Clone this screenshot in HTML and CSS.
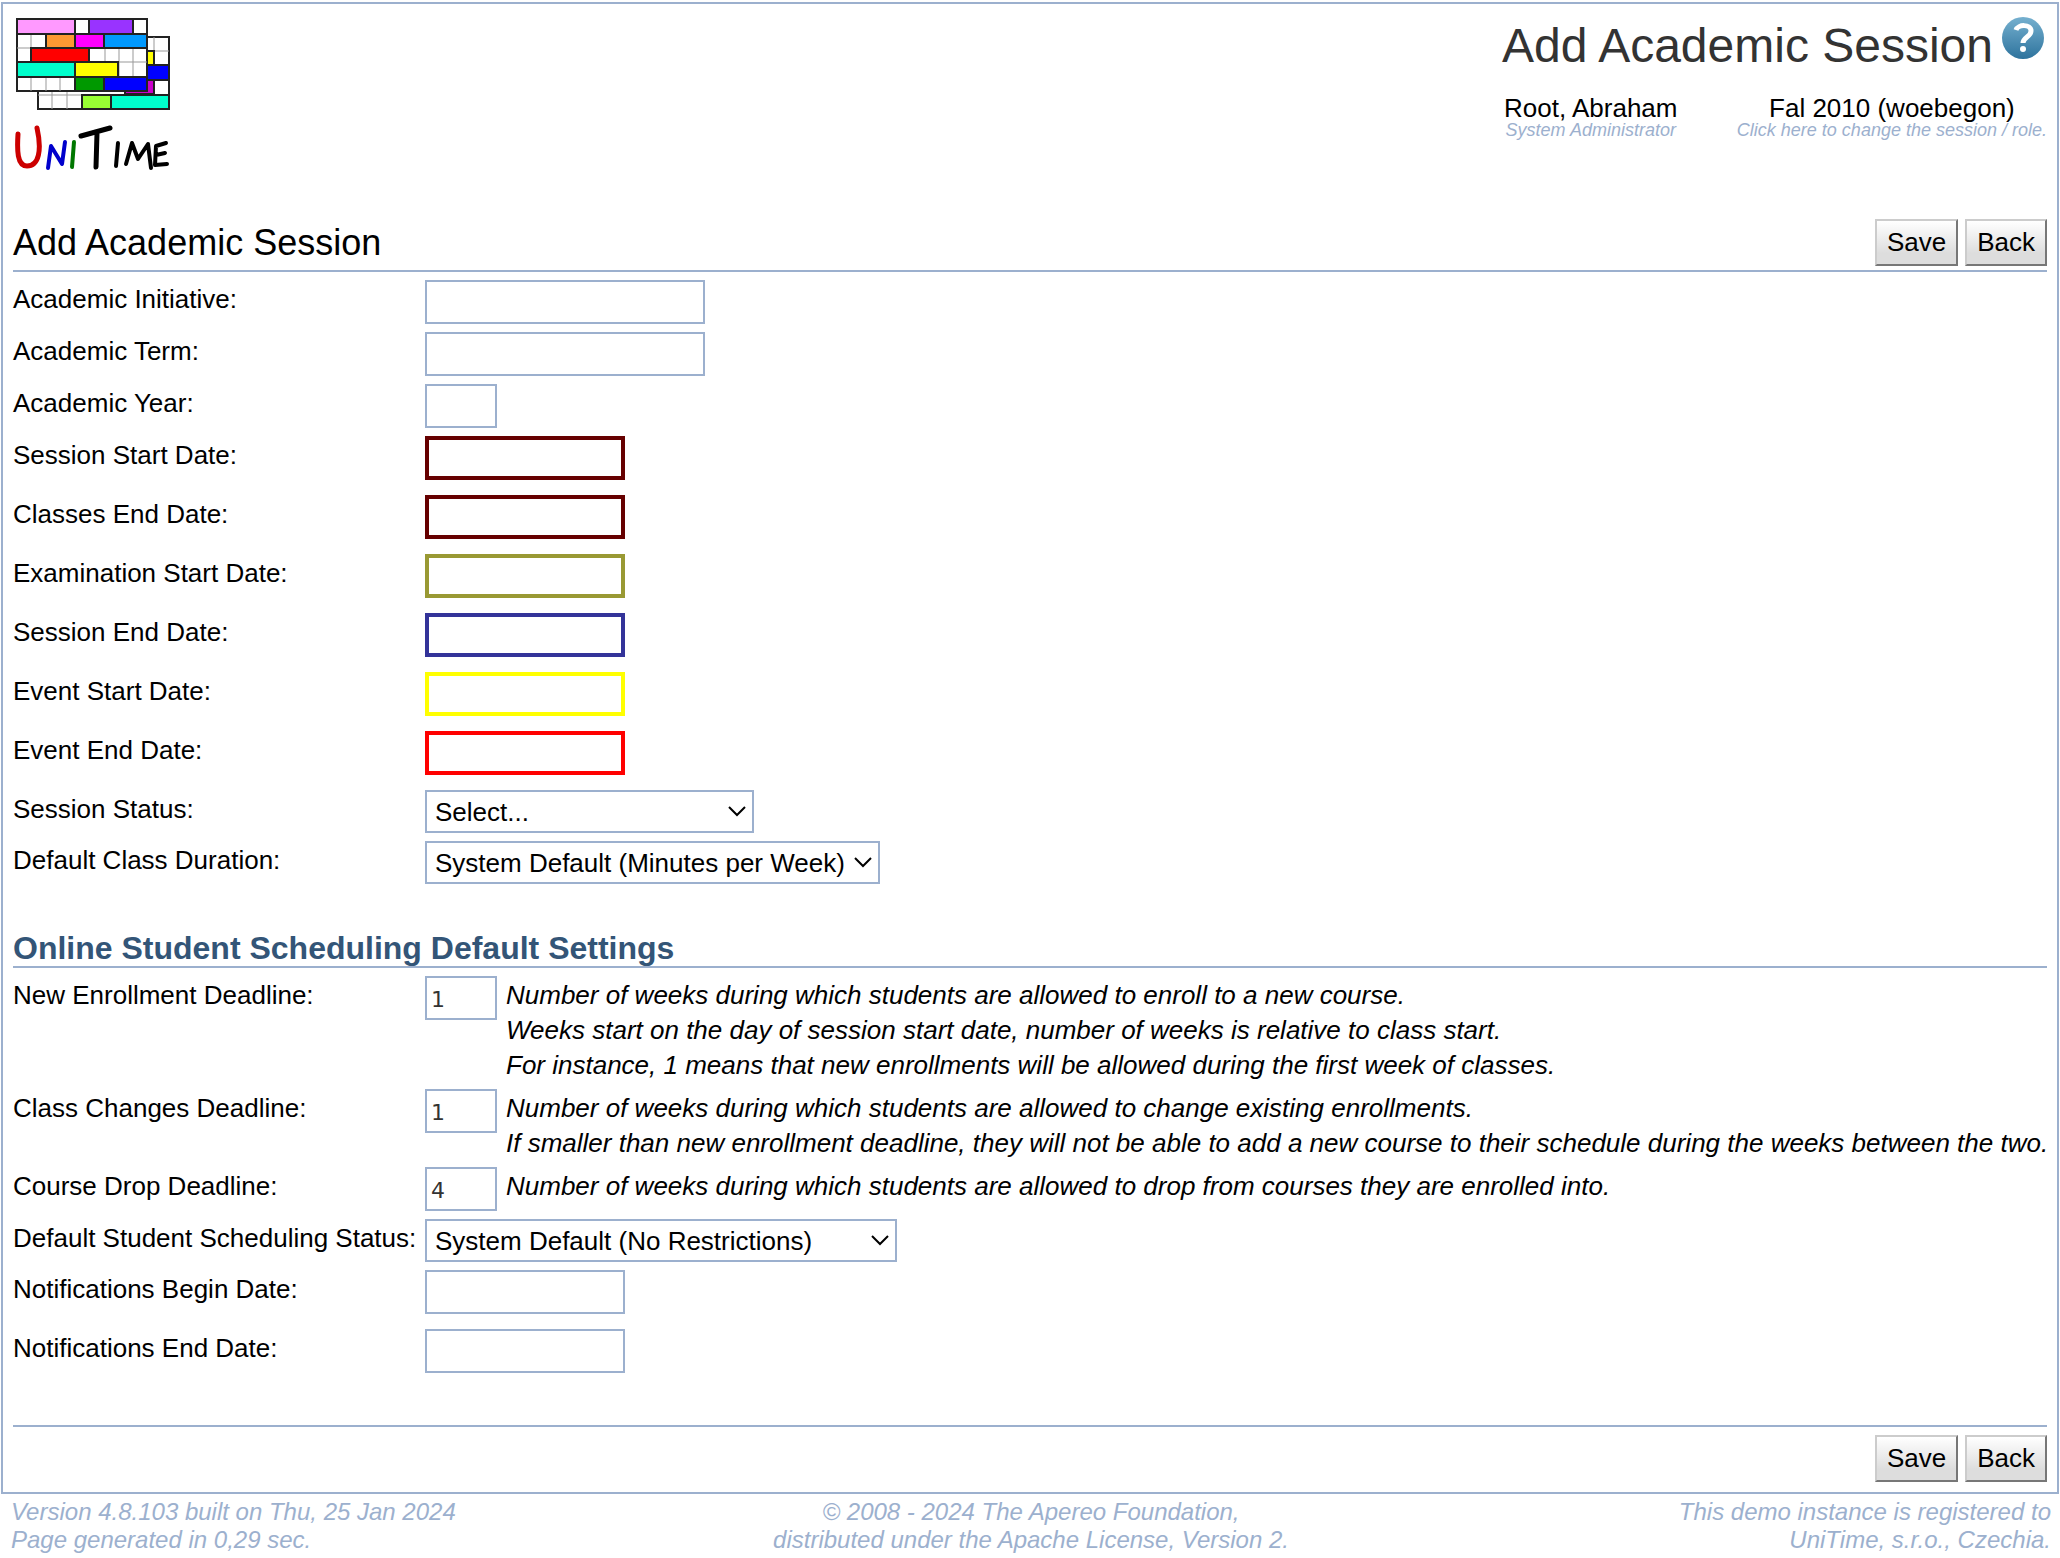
FILE: index.html
```html
<!DOCTYPE html>
<html lang="en">
<head>
<meta charset="utf-8">
<title>Add Academic Session</title>
<link rel="stylesheet" href="styles.css">
</head>
<body>
<main class="frame">
  <header class="banner">
    <svg class="logo" viewBox="0 0 160 160" role="img" aria-label="UniTime">
      <g stroke="#222" stroke-width="2">
        <path fill="#fff" d="M23 21H154V93H23z"/>
        <path fill="none" stroke="#999" stroke-width="1" d="M23 79H67M37 75V93M52 75V93M133 35H154M133 49H154M139 21V93"/>
        <path fill="#ff0" d="M124 35H139V49H124z"/>
        <path fill="#00f" d="M124 49H154V64H124z"/>
        <path fill="#c0c" d="M110 64H139V78H110z"/>
        <path fill="#9f3" d="M67 79H96V93H67z"/>
        <path fill="#0fc" d="M96 79H154V93H96z"/>
        <path fill="#fff" d="M2 3H132V75H2z"/>
        <path fill="none" stroke="#999" stroke-width="1" d="M16 18V46M31 18V32M2 32H16M16 61V75M31 61V75M45 61V75M90 32V46M104 32V61M118 32V61M90 46H132"/>
        <path fill="#f9f" d="M2 3H60V18H2z"/>
        <path fill="#93f" d="M74 3H118V18H74z"/>
        <path fill="#f93" d="M31 18H60V32H31z"/>
        <path fill="#f0f" d="M60 18H89V32H60z"/>
        <path fill="#09f" d="M89 18H132V32H89z"/>
        <path fill="red" d="M16 32H74V46H16z"/>
        <path fill="#0fc" d="M2 46H60V61H2z"/>
        <path fill="#ff0" d="M60 46H103V61H60z"/>
        <path fill="#090" d="M60 61H89V75H60z"/>
        <path fill="#00f" d="M89 61H132V75H89z"/>
      </g>
      <g fill="none" stroke-linecap="round" stroke-linejoin="round">
        <path stroke="#c00" stroke-width="5" d="M3 118C2 134 2 150 12 150C24 150 27 134 22 112"/>
        <path stroke="#00c" stroke-width="4" d="M33 152L36 130L47 148L50 126"/>
        <path stroke="#070" stroke-width="4" d="M59 126L57 151"/>
        <path stroke="#000" stroke-width="5" d="M66 120L95 112M82 117L81 151"/>
        <path stroke="#000" stroke-width="4" d="M103 127L101 150M111 148L117 127L123 143L133 128L136 152M151 127L141 130L140 149L152 148M141 139L150 137"/>
      </g>
    </svg>
    <div class="heading">
      <div class="title-row">
        <h1 class="page-title">Add Academic Session</h1>
        <a class="help" href="#" aria-label="Help">
          <svg viewBox="0 0 44 44">
            <defs><linearGradient id="disc" x1="0" y1="0" x2="0" y2="1"><stop offset="0" stop-color="#75b0cf"/><stop offset="1" stop-color="#2e739d"/></linearGradient></defs>
            <circle cx="22" cy="22" r="21" fill="url(#disc)"/>
            <path d="M15 14C17 8 30 8 30 15C30 21 22 21 22 27" fill="none" stroke="#fff" stroke-width="5"/>
            <circle cx="22" cy="33" r="3" fill="#fff"/>
          </svg>
        </a>
      </div>
      <div class="who">
        <div class="who-cell"><span>Root, Abraham</span><small>System Administrator</small></div>
        <div class="who-cell"><span>Fal 2010 (woebegon)</span><a href="#">Click here to change the session / role.</a></div>
      </div>
    </div>
  </header>
  <form class="session">
    <div class="bar">
      <h2 class="bar-title">Add Academic Session</h2>
      <div class="buttons"><button type="submit">Save</button><button type="button">Back</button></div>
    </div>
    <div class="rows">
      <label for="initiative">Academic Initiative:</label><input id="initiative" class="wide" type="text">
      <label for="term">Academic Term:</label><input id="term" class="wide" type="text">
      <label for="year">Academic Year:</label><input id="year" class="narrow" type="text">
      <label for="start">Session Start Date:</label><input id="start" class="date maroon" type="text">
      <label for="classes-end">Classes End Date:</label><input id="classes-end" class="date maroon" type="text">
      <label for="exams">Examination Start Date:</label><input id="exams" class="date olive" type="text">
      <label for="end">Session End Date:</label><input id="end" class="date navy" type="text">
      <label for="event-start">Event Start Date:</label><input id="event-start" class="date yellow" type="text">
      <label for="event-end">Event End Date:</label><input id="event-end" class="date red" type="text">
      <label for="status">Session Status:</label>
      <div class="pick pick-status"><select id="status"><option>Select...</option></select><svg viewBox="0 0 18 12"><path d="M1 2L9 10L17 2"/></svg></div>
      <label for="duration">Default Class Duration:</label>
      <div class="pick pick-duration"><select id="duration"><option>System Default (Minutes per Week)</option></select><svg viewBox="0 0 18 12"><path d="M1 2L9 10L17 2"/></svg></div>
    </div>
    <h3 class="section">Online Student Scheduling Default Settings</h3>
    <div class="rows">
      <label for="enroll">New Enrollment Deadline:</label>
      <div class="weeks"><input id="enroll" class="narrow" type="text" value="1"><p>Number of weeks during which students are allowed to enroll to a new course.<br>Weeks start on the day of session start date, number of weeks is relative to class start.<br>For instance, 1 means that new enrollments will be allowed during the first week of classes.</p></div>
      <label for="changes">Class Changes Deadline:</label>
      <div class="weeks"><input id="changes" class="narrow" type="text" value="1"><p>Number of weeks during which students are allowed to change existing enrollments.<br>If smaller than new enrollment deadline, they will not be able to add a new course to their schedule during the weeks between the two.</p></div>
      <label for="drop">Course Drop Deadline:</label>
      <div class="weeks"><input id="drop" class="narrow" type="text" value="4"><p>Number of weeks during which students are allowed to drop from courses they are enrolled into.</p></div>
      <label for="student-status">Default Student Scheduling Status:</label>
      <div class="pick pick-student"><select id="student-status"><option>System Default (No Restrictions)</option></select><svg viewBox="0 0 18 12"><path d="M1 2L9 10L17 2"/></svg></div>
      <label for="notify-start">Notifications Begin Date:</label><input id="notify-start" class="date" type="text">
      <label for="notify-end">Notifications End Date:</label><input id="notify-end" class="date" type="text">
    </div>
    <div class="bar bar-bottom">
      <div class="buttons"><button type="submit">Save</button><button type="button">Back</button></div>
    </div>
  </form>
</main>
<footer class="footer">
  <p>Version 4.8.103 built on Thu, 25 Jan 2024<br>Page generated in 0,29 sec.</p>
  <p>© 2008 - 2024 The Apereo Foundation,<br>distributed under the Apache License, Version 2.</p>
  <p>This demo instance is registered to<br>UniTime, s.r.o., Czechia.</p>
</footer>
</body>
</html>
```
FILE: styles.css
```css
* { box-sizing: border-box; }
body {
  margin: 0;
  padding: 2px 1px 0;
  background: #fff;
  color: #000;
  font: 26px/35px "Liberation Sans", Arial, sans-serif;
}
h1, h2, h3, p { margin: 0; font-weight: 400; }
a { color: inherit; text-decoration: none; }

.frame { border: 2px solid #9cb0ce; padding: 10px; }
.banner { display: flex; justify-content: space-between; align-items: flex-start; height: 205px; }
.logo { width: 160px; height: 160px; margin: 2px 0 0 2px; }
.title-row { display: flex; justify-content: space-between; gap: 8px; }
.page-title { color: #333; font-size: 48px; line-height: 64px; }
.help { width: 44px; height: 44px; margin: 2px 2px 0 0; }
.help svg { display: block; }
.who { display: flex; justify-content: space-between; gap: 58px; margin-top: 16px; padding-left: 2px; }
.who-cell { display: flex; flex-direction: column; align-items: center; line-height: 28px; }
.who-cell small, .who-cell a { color: #9cb0ce; font-size: 18px; line-height: 16px; font-style: italic; }

.bar { display: flex; justify-content: space-between; align-items: center; border-bottom: 2px solid #9cb0ce; padding-bottom: 4px; }
.bar-title { font-size: 36px; line-height: 47px; }
.bar-bottom { justify-content: flex-end; border: 0; border-top: 2px solid #9cb0ce; margin-top: 45px; padding: 8px 0 0; }
.buttons { display: flex; gap: 7px; }
button {
  height: 47px;
  padding: 0 10px;
  border: 2px solid;
  border-color: #ccc #777 #777 #ccc;
  background: linear-gradient(#fff, #ddd 75%, #ddd);
  color: #000;
  font: inherit;
}

.rows { display: grid; grid-template-columns: 412px 1fr; row-gap: 8px; align-items: start; justify-items: start; padding-top: 8px; }
label { padding-top: 2px; }
input { height: 44px; padding: 2px 4px 0; border: 2px solid #9cb0ce; background: #fff; color: #333; font: 22px "DejaVu Sans", sans-serif; }
.wide { width: 280px; }
.narrow { width: 72px; flex: none; }
.date { width: 200px; margin-bottom: 7px; }
.maroon { border: 4px solid #600; }
.olive { border: 4px solid #993; }
.navy { border: 4px solid #339; }
.yellow { border: 4px solid #ff0; }
.red { border: 4px solid #f00; }
.weeks { display: flex; align-items: flex-start; gap: 9px; font-style: italic; }
.weeks p { margin: 2px -8px -2px 0; }
.pick { display: grid; align-items: center; }
.pick > * { grid-area: 1 / 1; }
.pick select { appearance: none; width: 100%; height: 43px; padding: 2px 8px 0; border: 2px solid #9cb0ce; border-radius: 0; background: #fff; color: #000; font: inherit; }
.pick svg { justify-self: end; width: 18px; height: 12px; margin: 0 8px 2px 0; fill: none; stroke: #000; stroke-width: 2; pointer-events: none; }
.pick-status { width: 329px; }
.pick-duration { width: 455px; }
.pick-student { width: 472px; }
.section { margin-top: 47px; border-bottom: 2px solid #9cb0ce; color: #357; font-size: 32px; font-weight: 700; }

.footer { display: grid; grid-template-columns: 1fr 1fr 1fr; padding: 4px 8px 0 10px; color: #9cb0ce; font-size: 24px; font-style: italic; line-height: 28px; }
.footer p:nth-child(2) { text-align: center; }
.footer p:last-child { text-align: right; }
```
